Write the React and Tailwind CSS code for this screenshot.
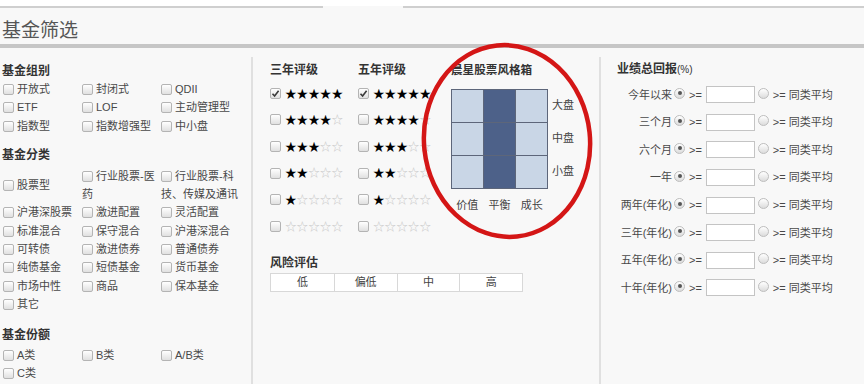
import React from 'react';

const font = "font-['Liberation_Sans','Noto_Sans_CJK_SC',sans-serif]";

function Box({ checked }) {
  return (
    <span className="relative inline-block align-[-2px] w-[11px] h-[11px] mr-[3px] rounded-[2px] border border-[#b4b4b4] bg-linear-to-b from-white to-[#e0e0e0]">
      {checked && (
        <svg viewBox="0 0 11 11" className="absolute -left-px -top-px w-[11px] h-[11px]">
          <path d="M2.5 5.8 L4.6 8 L8.6 2.8" fill="none" stroke="#3a3a3a" strokeWidth="1.6" />
        </svg>
      )}
    </span>
  );
}

function Radio({ checked }) {
  return (
    <span className="flex items-center justify-center w-[11px] h-[11px] -mt-[3px] rounded-full border border-[#bdbdbd] bg-linear-to-b from-white to-[#dcdcdc]">
      {checked && <span className="w-[4px] h-[4px] rounded-full bg-[#555]" />}
    </span>
  );
}

const group1 = [
  ['开放式', '封闭式', 'QDII'],
  ['ETF', 'LOF', '主动管理型'],
  ['指数型', '指数增强型', '中小盘'],
];

const group2 = [
  ['沪港深股票', '激进配置', '灵活配置'],
  ['标准混合', '保守混合', '沪港深混合'],
  ['可转债', '激进债券', '普通债券'],
  ['纯债基金', '短债基金', '货币基金'],
  ['市场中性', '商品', '保本基金'],
  ['其它'],
];

const group3 = [['A类', 'B类', 'A/B类'], ['C类']];

function Grid({ rows }) {
  return (
    <div className="grid grid-cols-[79px_79px_80px] leading-[18.4px]">
      {rows.flat().map((t, i) => (
        <span key={i} className="pl-px">
          <Box />
          {t}
        </span>
      ))}
    </div>
  );
}

function Stars({ n, checked }) {
  return (
    <div className="flex items-center h-[26.6px]">
      <Box checked={checked} />
      <span className="ml-px text-[11.6px] text-black tracking-[0px] font-['Noto_Sans_CJK_SC',sans-serif]">
        {'★'.repeat(n)}
        <span className="text-[#c8c8c8]">{'☆'.repeat(5 - n)}</span>
      </span>
    </div>
  );
}

function Rating({ title }) {
  return (
    <div>
      <div className="font-bold text-[12px] leading-[18px] text-[#333]">{title}</div>
      <div className="mt-[1px]">
        {[5, 4, 3, 2, 1, 0].map((n) => (
          <Stars key={n} n={n} checked={n === 5} />
        ))}
      </div>
    </div>
  );
}

const periods = ['今年以来', '三个月', '六个月', '一年', '两年(年化)', '三年(年化)', '五年(年化)', '十年(年化)'];

export default function App() {
  return (
    <div className={`relative w-[864px] h-[384px] overflow-hidden bg-[#f8f8f8] text-[11px] text-[#484848] ${font}`}>
      {/* top tab strip */}
      <div className="h-[6px] bg-white" />
      <div className="flex h-[2px]">
        <div className="w-[323px] bg-[#cfcfcf]" />
        <div className="w-[80px]" />
        <div className="flex-1 bg-[#cfcfcf]" />
      </div>

      <div className="pl-[2px] pt-[11px] h-[36px] text-[19px] leading-[24px] text-[#555]">基金筛选</div>
      <div className="h-[4px] bg-[#c6c6c6]" />

      <div className="flex h-[336px]">
        {/* left */}
        <div className="w-[251px] pl-[2px] pt-[14px]">
          <div className="font-bold text-[12px] leading-[18px] text-[#333]">基金组别</div>
          <Grid rows={group1} />

          <div className="mt-[11px] font-bold text-[12px] leading-[18px] text-[#333]">基金分类</div>
          <div className="mt-[3px] grid grid-cols-[79px_79px_80px] items-center leading-[18px]">
            <span className="pl-px"><Box />股票型</span>
            <span className="pl-px"><Box />行业股票-医<br />药</span>
            <span className="pl-px"><Box />行业股票-科<br />技、传媒及通讯</span>
          </div>
          <Grid rows={group2} />

          <div className="mt-[12px] font-bold text-[12px] leading-[18px] text-[#333]">基金份额</div>
          <div className="mt-[2px]">
            <Grid rows={group3} />
          </div>
        </div>

        <div className="w-[2px] mt-[9px] bg-[#e0e0e0]" />

        {/* middle */}
        <div className="w-[346px] pl-[17px] pt-[13px]">
          <div className="flex">
            <div className="w-[88px]">
              <Rating title="三年评级" />
            </div>
            <div className="w-[93px]">
              <Rating title="五年评级" />
            </div>
            <div>
              <div className="font-bold text-[11.6px] leading-[18px] text-[#333]">晨星股票风格箱</div>
              <div className="flex mt-[10px]">
                <div className="grid grid-cols-[31px_31px_31px] grid-rows-[32px_32px_32px] gap-px p-px bg-[#5d667a]">
                  {Array.from({ length: 9 }).map((_, i) => (
                    <div key={i} className={i % 3 === 1 ? 'bg-[#4d6189]' : 'bg-[#c9d6e6]'} />
                  ))}
                </div>
                <div className="ml-[4px] grid grid-rows-[33px_33px_33px] items-center text-[11px] text-[#444]">
                  <span>大盘</span>
                  <span>中盘</span>
                  <span>小盘</span>
                </div>
              </div>
              <div className="mt-[9px] w-[97px] grid grid-cols-3 text-center leading-[14px] text-[#444]">
                <span>价值</span>
                <span>平衡</span>
                <span>成长</span>
              </div>
            </div>
          </div>

          <div className="mt-[14px] font-bold text-[12px] leading-[18px] text-[#333]">风险评估</div>
          <div className="mt-px w-[253px] grid grid-cols-4 h-[19px] bg-white border border-[#d8d8d8] text-center leading-[17px] text-[#444]">
            <span>低</span>
            <span className="border-l border-[#d8d8d8]">偏低</span>
            <span className="border-l border-[#d8d8d8]">中</span>
            <span className="border-l border-[#d8d8d8]">高</span>
          </div>
        </div>

        <div className="w-[2px] mt-[9px] bg-[#e0e0e0]" />

        {/* right */}
        <div className="flex-1 pt-[12px]">
          <div className="pl-[16px] font-bold text-[12px] leading-[18px] text-[#333]">
            业绩总回报<span className="font-normal text-[10px]">(%)</span>
          </div>
          <div className="mt-[2px]">
            {periods.map((p) => (
              <div key={p} className="flex items-center h-[27.6px]">
                <span className="w-[71px] text-right">{p}</span>
                <span className="ml-[2px]"><Radio checked /></span>
                <span className="ml-[4px]">&gt;=</span>
                <span className="ml-[4px] w-[49px] h-[17px] bg-white border border-[#c4c4c4]" />
                <span className="ml-[3px]"><Radio /></span>
                <span className="ml-[4px]">&gt;= 同类平均</span>
              </div>
            ))}
          </div>
        </div>
      </div>

      {/* hand-drawn highlight */}
      <svg className="absolute left-0 top-0 pointer-events-none" width="864" height="384">
        <ellipse cx="507" cy="141" rx="83" ry="96" transform="rotate(-6 507 141)" fill="none" stroke="#d41616" strokeWidth="4.5" />
      </svg>
    </div>
  );
}
